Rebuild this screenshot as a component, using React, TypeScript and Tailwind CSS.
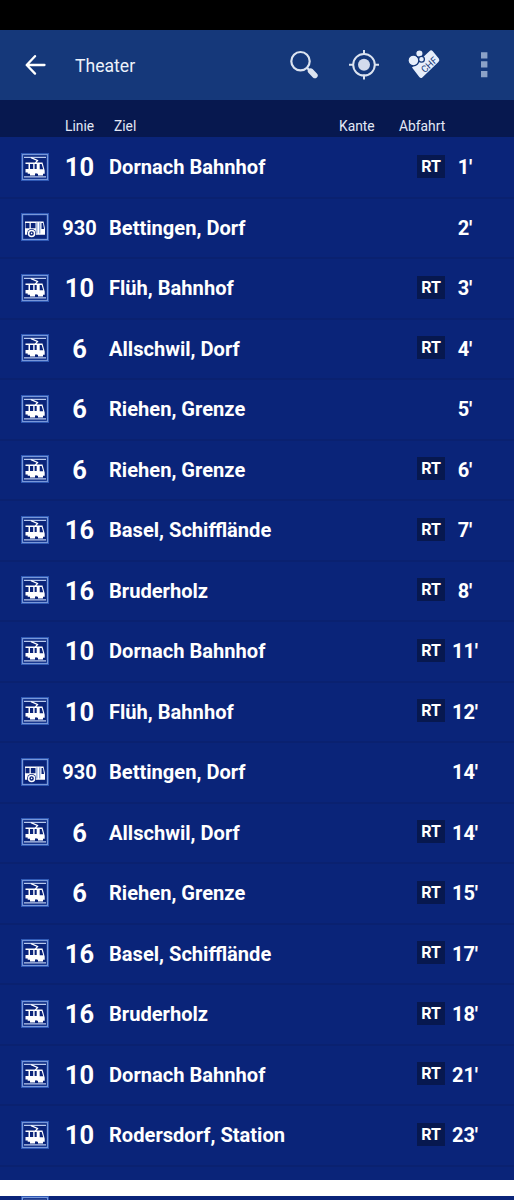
type Departure = {
  line: string;
  dest: string;
  time: string;
  rt?: boolean;
};

const departures: Departure[] = [
  { line: '10', dest: 'Dornach Bahnhof', time: "1'", rt: true },
  { line: '930', dest: 'Bettingen, Dorf', time: "2'" },
  { line: '10', dest: 'Flüh, Bahnhof', time: "3'", rt: true },
  { line: '6', dest: 'Allschwil, Dorf', time: "4'", rt: true },
  { line: '6', dest: 'Riehen, Grenze', time: "5'" },
  { line: '6', dest: 'Riehen, Grenze', time: "6'", rt: true },
  { line: '16', dest: 'Basel, Schifflände', time: "7'", rt: true },
  { line: '16', dest: 'Bruderholz', time: "8'", rt: true },
  { line: '10', dest: 'Dornach Bahnhof', time: "11'", rt: true },
  { line: '10', dest: 'Flüh, Bahnhof', time: "12'", rt: true },
  { line: '930', dest: 'Bettingen, Dorf', time: "14'" },
  { line: '6', dest: 'Allschwil, Dorf', time: "14'", rt: true },
  { line: '6', dest: 'Riehen, Grenze', time: "15'", rt: true },
  { line: '16', dest: 'Basel, Schifflände', time: "17'", rt: true },
  { line: '16', dest: 'Bruderholz', time: "18'", rt: true },
  { line: '10', dest: 'Dornach Bahnhof', time: "21'", rt: true },
  { line: '10', dest: 'Rodersdorf, Station', time: "23'", rt: true },
];

export default function App() {
  return (
    <div className="flex h-[1200px] w-[514px] flex-col overflow-hidden bg-[#0a2479] font-['Roboto',sans-serif] text-white">
      <div className="h-[30px] shrink-0 bg-black" />
      <header className="flex h-[70px] shrink-0 items-center bg-[#15387a]">
        <button className="ml-[25px] w-5" aria-label="Zurück">
          <BackIcon />
        </button>
        <h1 className="ml-[30px] flex-1 pt-[2px] text-[17.6px] leading-6 text-[#edf2fb]">Theater</h1>
        <div className="flex items-center">
          <SearchIcon />
          <LocateIcon />
          <TicketIcon />
          <MenuIcon />
        </div>
      </header>

      <div className="flex h-[37px] shrink-0 items-end bg-[#07184f] pb-[2px] text-[13.8px] leading-[18px] text-[#e3e8f5]">
        <span className="ml-[65px] w-[49px]">Linie</span>
        <span className="w-[225px]">Ziel</span>
        <span className="w-[60px]">Kante</span>
        <span>Abfahrt</span>
      </div>

      <main className="h-[1043px] shrink-0 pt-px">
        {departures.map((d, i) => (
          <Row key={i} {...d} />
        ))}
      </main>

      <div className="h-4 shrink-0 bg-white" />
      <div className="h-1 shrink-0 overflow-hidden pl-[21px]">
        <VehicleIcon />
      </div>
    </div>
  );
}

function Row({ line, dest, time, rt }: Departure) {
  const bus = line.length > 2;
  return (
    <div className="flex h-[60.5px] items-center border-b-2 border-[#0a2170] font-bold">
      <div className="ml-[21px] w-7 pb-px">
        <VehicleIcon bus={bus} />
      </div>
      <div className={`ml-[8px] w-[45px] text-center ${bus ? 'text-[20px]' : 'text-[25.5px]'} leading-8`}>{line}</div>
      <div className="ml-[7px] w-[308px] text-[20.1px] leading-7">{dest}</div>
      <div className="w-7 pb-0.5">
        {rt && <div className="h-[23px] bg-[#07184f] text-center text-[16px] leading-[23px]">RT</div>}
      </div>
      <div className="w-[40px] text-center text-[20px] leading-7">{time}</div>
    </div>
  );
}

function VehicleIcon({ bus }: { bus?: boolean }) {
  return (
    <svg width="28" height="28" viewBox="0 0 28 28" fill="none" className="block">
      <rect x="1.2" y="1.2" width="25.6" height="25.6" stroke="#2f59b5" strokeWidth="2.4" />
      <rect x="1.5" y="1.5" width="25" height="25" stroke="#7897d8" strokeWidth="1" />
      {bus ? (
        <>
          <path d="M4 8.5h18.5l1.5 7v6.2H4z" fill="#fff" />
          <path d="M4.5 10h4v5.2h-4zM9.8 10h4.7v5.2H9.8zM20.5 10h1.5l1 6h-2.5z" fill="#0a2479" />
          <path d="M15.9 9.5v11M18.8 9.5v11" stroke="#6687c9" strokeWidth="1" />
          <circle cx="10.6" cy="20.4" r="4.5" fill="#0a2479" />
          <circle cx="10.6" cy="20.4" r="3" stroke="#fff" strokeWidth="1.5" />
          <circle cx="10.6" cy="20.4" r="0.8" fill="#fff" />
        </>
      ) : (
        <>
          <path d="M3 4.4h22M3 23.9h22" stroke="#b9caef" strokeWidth="1.2" />
          <path d="M10 4.7l6.5 2.8-2.3 2.8" stroke="#fff" strokeWidth="1.3" />
          <path d="M4.5 9.5h17l2.2 8.2v3H4.5z" fill="#fff" />
          <path d="M4 11h3.5v5H4zM9 11h3.2v5H9zM13.6 11h2.1v5h-2.1zM18.7 11h2l1.5 5.3h-3.5z" fill="#0a2479" />
          <path d="M9 20h5v2.5H9zM17 20h5v2.5h-5z" fill="#fff" />
          <path d="M3.5 19.5h3.2v2H3.5zM14.2 20.5h1.7v2h-1.7z" fill="#0a2479" />
        </>
      )}
    </svg>
  );
}

function BackIcon() {
  return (
    <svg width="21" height="20" viewBox="0 0 21 20" fill="none" stroke="#fff" strokeWidth="2.3" strokeLinecap="round" strokeLinejoin="round">
      <path d="M10 1.2L1.7 10l8.3 8.6M2 10h17.5" />
    </svg>
  );
}

function SearchIcon() {
  return (
    <svg width="60" height="60" viewBox="0 0 60 60" fill="none">
      <circle cx="26.5" cy="26.2" r="9.2" stroke="#dbe3f0" strokeWidth="2.2" />
      <path d="M33 32.8l3 3" stroke="#dbe3f0" strokeWidth="2.2" />
      <path d="M36.6 36.1l4.3 4.3" stroke="#dbe3f0" strokeWidth="5.6" strokeLinecap="round" />
    </svg>
  );
}

function LocateIcon() {
  return (
    <svg width="60" height="60" viewBox="0 0 60 60" fill="none" stroke="#dbe3f0" strokeWidth="2">
      <circle cx="30" cy="29.8" r="10.8" />
      <circle cx="30" cy="29.8" r="6" fill="#d3dbed" stroke="none" />
      <path d="M30 15v5M30 39.6v5M15 29.8h5M40 29.8h5" />
    </svg>
  );
}

function TicketIcon() {
  return (
    <svg width="60" height="60" viewBox="0 0 60 60">
      <g fill="#e6eefb">
        <path d="M35.4 16.2Q37.2 14.5 38.8 16.3L44.8 23.4Q46.2 25.2 44.4 26.9L28.3 42.5Q26.8 43.8 25.3 42L18 32.6z" />
        <g stroke="#15387a" strokeWidth="1.3">
          <circle cx="19.4" cy="25.4" r="5.4" />
          <circle cx="25.4" cy="18.6" r="3.7" />
          <circle cx="27.5" cy="24.2" r="2.9" />
        </g>
      </g>
      <text x="35" y="29.6" fill="#15387a" fontSize="9.4" textAnchor="middle" dominantBaseline="central" transform="rotate(-43 35 29.6)">
        CHF
      </text>
    </svg>
  );
}

function MenuIcon() {
  return (
    <svg width="60" height="60" viewBox="0 0 60 60" fill="#8ca2c7">
      <path d="M27 17.2h6.4v6.2H27zM27 26.3h6.4v6.2H27zM27 36h6.4v6.3H27z" />
    </svg>
  );
}
